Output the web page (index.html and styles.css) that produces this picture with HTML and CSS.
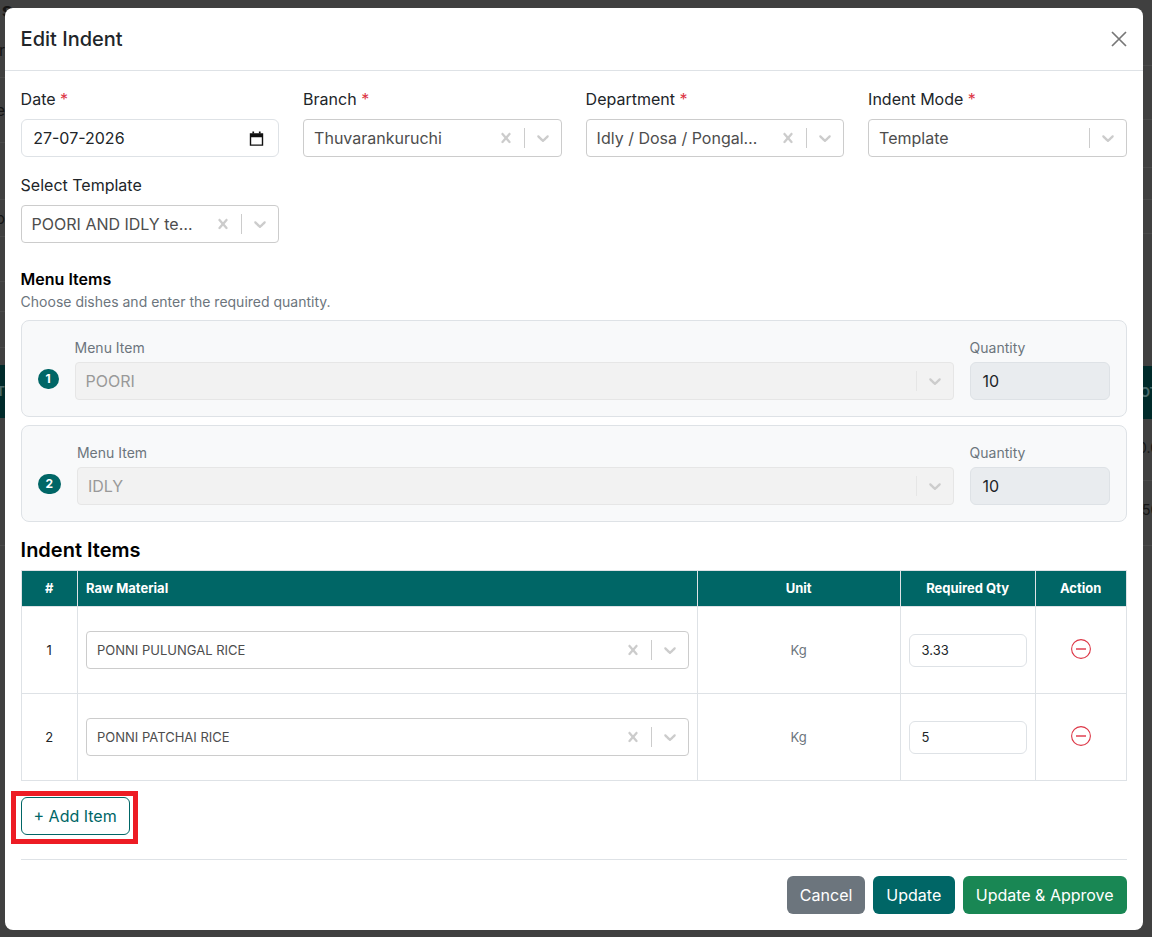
FILE: index.html
```html
<!DOCTYPE html>
<html lang="en">
<head>
<meta charset="utf-8">
<title>Edit Indent</title>
<link rel="stylesheet" href="styles.css">
</head>
<body>
<svg class="defs" width="0" height="0" aria-hidden="true">
  <symbol id="i-x" viewBox="0 0 20 20"><path d="M14.348 14.849c-0.469 0.469-1.229 0.469-1.697 0l-2.651-3.030-2.651 3.029c-0.469 0.469-1.229 0.469-1.697 0-0.469-0.469-0.469-1.229 0-1.697l2.758-3.15-2.759-3.152c-0.469-0.469-0.469-1.228 0-1.697s1.228-0.469 1.697 0l2.652 3.031 2.652-3.031c0.469-0.469 1.228-0.469 1.697 0s0.469 1.229 0 1.697l-2.758 3.152 2.758 3.15c0.469 0.469 0.469 1.229 0 1.698z"/></symbol>
  <symbol id="i-down" viewBox="0 0 20 20"><path d="M4.516 7.548c0.436-0.446 1.043-0.481 1.576 0l3.908 3.747 3.908-3.747c0.533-0.481 1.141-0.446 1.576 0 0.436 0.445 0.408 1.197 0 1.615-0.406 0.418-4.695 4.502-4.695 4.502-0.217 0.223-0.502 0.335-0.789 0.335s-0.572-0.112-0.791-0.335c0 0-4.287-4.084-4.695-4.502s-0.436-1.17 0-1.615z"/></symbol>
  <symbol id="i-minus" viewBox="0 0 20 20"><circle cx="10" cy="10" r="9.4" fill="none" stroke="#dc3545" stroke-width="1.1"/><path d="M5 10h10" stroke="#e8707d" stroke-width="2"/></symbol>
</svg>

<div class="page" aria-hidden="true">
  <div class="strip strip-left">
    <div class="bg-row r0"><b>s</b></div>
    <div class="bg-row r1">r</div>
    <div class="bg-row r2">e</div>
    <div class="bg-row r3"></div>
    <div class="bg-row r4">o</div>
    <div class="bg-row r5"></div>
    <div class="bg-row r6"></div>
    <div class="bg-row r7"></div>
    <div class="bg-band">T</div>
    <div class="bg-row r8"></div>
  </div>
  <div class="strip strip-right">
    <div class="bg-row q0"></div>
    <div class="bg-row q1"></div>
    <div class="bg-row q2"></div>
    <div class="bg-row q3"></div>
    <div class="bg-row q4"></div>
    <div class="bg-row q5"></div>
    <div class="bg-band">OT</div>
    <div class="bg-row q6"><span>0.0</span></div>
    <div class="bg-row q7"><span>50</span></div>
  </div>
</div>

<div class="modal">
  <header class="modal-head">
    <h1 class="modal-title">Edit Indent</h1>
    <button class="close" aria-label="Close">
      <svg width="16" height="16" viewBox="0 0 16 16"><path d="M1 1l14 14M15 1L1 15" stroke="#777" stroke-width="1.7" fill="none"/></svg>
    </button>
  </header>

  <div class="modal-body">
    <div class="form-grid">
      <div class="field">
        <label class="label">Date <span class="req">*</span></label>
        <div class="input date">
          <span>27-07-2026</span>
          <svg class="cal" width="15" height="15" viewBox="0 0 15 15"><path d="M.8 2.2h13.4v12.6H.8z M2.2 6.2v7.2h10.6V6.2z" fill="#111" fill-rule="evenodd"/><path d="M3.4 .4h1.7v2H3.4zM9.9 .4h1.7v2H9.9z" fill="#111"/></svg>
        </div>
      </div>
      <div class="field">
        <label class="label">Branch <span class="req">*</span></label>
        <div class="select">
          <span class="value">Thuvarankuruchi</span>
          <svg class="ind"><use href="#i-x"/></svg><i class="sep"></i><svg class="ind"><use href="#i-down"/></svg>
        </div>
      </div>
      <div class="field">
        <label class="label">Department <span class="req">*</span></label>
        <div class="select">
          <span class="value">Idly / Dosa / Pongal/Vadai</span>
          <svg class="ind"><use href="#i-x"/></svg><i class="sep"></i><svg class="ind"><use href="#i-down"/></svg>
        </div>
      </div>
      <div class="field">
        <label class="label">Indent Mode <span class="req">*</span></label>
        <div class="select">
          <span class="value">Template</span>
          <i class="sep"></i><svg class="ind"><use href="#i-down"/></svg>
        </div>
      </div>
      <div class="field">
        <label class="label">Select Template</label>
        <div class="select">
          <span class="value">POORI AND IDLY template</span>
          <svg class="ind"><use href="#i-x"/></svg><i class="sep"></i><svg class="ind"><use href="#i-down"/></svg>
        </div>
      </div>
    </div>

    <h2 class="section-title">Menu Items</h2>
    <p class="section-sub">Choose dishes and enter the required quantity.</p>

    <div class="menu-card">
      <span class="badge">1</span>
      <div class="menu-main">
        <div class="small-label">Menu Item</div>
        <div class="select disabled">
          <span class="value">POORI</span>
          <i class="sep"></i><svg class="ind"><use href="#i-down"/></svg>
        </div>
      </div>
      <div class="menu-qty">
        <div class="small-label">Quantity</div>
        <div class="input readonly">10</div>
      </div>
    </div>

    <div class="menu-card">
      <span class="badge">2</span>
      <div class="menu-main">
        <div class="small-label">Menu Item</div>
        <div class="select disabled">
          <span class="value">IDLY</span>
          <i class="sep"></i><svg class="ind"><use href="#i-down"/></svg>
        </div>
      </div>
      <div class="menu-qty">
        <div class="small-label">Quantity</div>
        <div class="input readonly">10</div>
      </div>
    </div>

    <h2 class="items-title">Indent Items</h2>

    <table class="items">
      <colgroup>
        <col class="c-num"><col class="c-raw"><col class="c-unit"><col class="c-qty"><col class="c-act">
      </colgroup>
      <thead>
        <tr><th>#</th><th class="left">Raw Material</th><th>Unit</th><th>Required Qty</th><th>Action</th></tr>
      </thead>
      <tbody>
        <tr>
          <td class="num">1</td>
          <td>
            <div class="select compact">
              <span class="value">PONNI PULUNGAL RICE</span>
              <svg class="ind"><use href="#i-x"/></svg><i class="sep"></i><svg class="ind"><use href="#i-down"/></svg>
            </div>
          </td>
          <td class="unit">Kg</td>
          <td><div class="input qty">3.33</div></td>
          <td class="act"><svg class="remove"><use href="#i-minus"/></svg></td>
        </tr>
        <tr>
          <td class="num">2</td>
          <td>
            <div class="select compact">
              <span class="value">PONNI PATCHAI RICE</span>
              <svg class="ind"><use href="#i-x"/></svg><i class="sep"></i><svg class="ind"><use href="#i-down"/></svg>
            </div>
          </td>
          <td class="unit">Kg</td>
          <td><div class="input qty">5</div></td>
          <td class="act"><svg class="remove"><use href="#i-minus"/></svg></td>
        </tr>
      </tbody>
    </table>

    <div class="add-wrap">
      <button class="btn-add">+ Add Item</button>
      <span class="annot"></span>
    </div>

    <footer class="modal-foot">
      <button class="btn btn-cancel">Cancel</button>
      <button class="btn btn-update">Update</button>
      <button class="btn btn-approve">Update &amp; Approve</button>
    </footer>
  </div>
</div>
</body>
</html>
```

FILE: styles.css
```css
* { box-sizing: border-box; }
html, body { margin: 0; padding: 0; }
body {
  width: 1152px;
  height: 937px;
  overflow: hidden;
  background: #404040;
  font-family: Inter, "Liberation Sans", sans-serif;
  color: #212529;
  position: relative;
}
.defs { position: absolute; }

/* dimmed page behind the modal */
.page { display: flex; justify-content: space-between; height: 937px; }
.strip { overflow: hidden; font-size: 16px; color: #161616; }
.strip-left { width: 14px; }
.strip-right { width: 9px; }
.bg-row { border-bottom: 1px solid #4a4a4a; white-space: nowrap; }
.strip-left .bg-row { display: flex; justify-content: flex-end; align-items: center; padding-right: 9px; }
.r0 { height: 78px; align-items: flex-start !important; font-size: 20px; }
.r1 { height: 0; border: 0; }
.r0 b { margin: 0 -8px 0 0; line-height: 20px; }
.r1 { position: relative; top: -28px; }
.r2 { height: 65px; }
.r3 { height: 57px; }
.r4 { height: 37px; }
.r5 { height: 45px; }
.r6 { height: 30px; }
.r7 { height: 36px; }
.bg-band {
  height: 53px;
  margin-top: 17px;
  background: #002a2a;
  color: #4a6a6a;
  font-size: 13px;
  font-weight: 700;
  line-height: 53px;
  white-space: nowrap;
}
.strip-left .bg-band { display: flex; justify-content: flex-end; padding-right: 9px; }
.r8 { height: 128px; }
.q0 { height: 66px; }
.q1 { height: 54px; }
.q2 { height: 48px; }
.q3 { height: 32px; }
.q4 { height: 34px; }
.q5 { height: 0; border: 0; }
.strip-right .bg-band { margin-top: 132px; text-indent: -3px; }
.q6 { height: 62px; padding-top: 20px; font-size: 14px; text-indent: -5px; }
.q7 { height: 65px; padding-top: 20px; font-size: 14px; text-indent: -1px; }

/* modal */
.modal {
  position: absolute;
  top: 8px;
  left: 4.6px;
  width: 1138px;
  height: 922px;
  background: #fff;
  border-radius: 8px;
  display: flex;
  flex-direction: column;
}
.modal-head {
  height: 63px;
  flex: none;
  padding: 0 16px;
  display: flex;
  align-items: center;
  justify-content: space-between;
  border-bottom: 1px solid #dee2e6;
}
.modal-title { margin: 0; font-size: 20px; font-weight: 500; line-height: 1.5; color: #212529; }
.close { border: 0; background: none; padding: 0; width: 16px; height: 16px; display: block; }
.close svg { display: block; }
.modal-body { padding: 16px; flex: 1; }

.form-grid { display: grid; grid-template-columns: repeat(4, minmax(0, 1fr)); column-gap: 24px; row-gap: 16px; }
.label { display: block; font-size: 16px; line-height: 24px; margin-bottom: 8px; }
.req { color: #dc3545; }

.input {
  height: 38px;
  border: 1px solid #dee2e6;
  border-radius: 6px;
  background: #fff;
  font-size: 16px;
  padding: 0 12px;
  display: flex;
  align-items: center;
}
.date { justify-content: space-between; padding: 0 14px 0 11.6px; }
.cal { display: block; }

.select {
  height: 38px;
  border: 1px solid #ccc;
  border-radius: 4px;
  background: #fff;
  display: flex;
  align-items: center;
  padding-left: 10px;
}
.value {
  flex: 1;
  min-width: 0;
  overflow: hidden;
  text-overflow: ellipsis;
  white-space: nowrap;
  font-size: 16px;
  color: #4d4d4d;
  padding-right: 8px;
}
.ind { width: 20px; height: 20px; margin: 0 8px; fill: #ccc; flex: none; }
.sep { width: 1px; height: 20px; background: #ccc; flex: none; }
.select.disabled { background: #f2f2f2; border-color: #e6e6e6; }
.select.disabled .value { color: #999; }
.select.disabled .sep { background: #e6e6e6; }

.section-title { margin: 24px 0 0; font-size: 16px; font-weight: 600; line-height: 24px; color: #000; }
.section-sub { margin: 0 0 8px; font-size: 14px; line-height: 21px; color: #6c757d; }

.menu-card {
  height: 97px;
  margin-bottom: 8px;
  border: 1px solid #dee2e6;
  border-radius: 8px;
  background: #f8f9fa;
  padding: 16px;
  display: flex;
  align-items: center;
  gap: 16px;
}
.badge {
  flex: none;
  margin-top: 21px;
  padding: 0 7.9px;
  height: 20px;
  border-radius: 10px;
  background: #006666;
  color: #fff;
  font-size: 12px;
  font-weight: 700;
  line-height: 20px;
}
.menu-main { flex: 1; min-width: 0; }
.menu-qty { width: 140px; flex: none; }
.small-label { font-size: 14px; line-height: 21px; margin-bottom: 4px; color: #6c757d; }
.input.readonly { background: #e9ecef; border-color: #dee2e6; }

.items-title { margin: 0 0 5px; padding-top: 5px; font-size: 20px; font-weight: 600; line-height: 30px; color: #000; }

.items { width: 1105px; table-layout: fixed; border-collapse: collapse; font-size: 13px; }
.c-num { width: 56px; }
.c-raw { width: 620px; }
.c-unit { width: 203px; }
.c-qty { width: 135px; }
.c-act { width: 91px; }
.items th {
  height: 36px;
  padding: 0 8px 2px;
  background: #006666;
  color: #fff;
  font-size: 13px;
  font-weight: 700;
  text-align: center;
  border: 1px solid #dee2e6;
}
.items th.left { text-align: left; padding-left: 8.4px; }
.items td { height: 87px; padding: 0 8px; border: 1px solid #dee2e6; vertical-align: middle; }
.num { text-align: center; }
.unit { text-align: center; color: #6c757d; }
.act { text-align: center; }
.select.compact { padding-left: 10.4px; }
.compact .value { font-size: 13px; }
.input.qty { height: 33px; font-size: 13px; }
.remove { display: block; width: 20px; height: 20px; margin: -2px auto 0; }

.add-wrap { position: relative; width: 109px; height: 38px; margin-top: 16px; }
.btn-add {
  display: block;
  width: 109px;
  height: 38px;
  padding: 0;
  border: 1px solid #006666;
  border-radius: 6px;
  background: #fff;
  color: #006666;
  font: 400 16px Inter, "Liberation Sans", sans-serif;
}
.annot { position: absolute; top: -6px; left: -10px; right: -8px; bottom: -9px; border: 5px solid #ed1c24; }

.modal-foot {
  margin-top: 24px;
  padding-top: 16px;
  border-top: 1px solid #dee2e6;
  display: flex;
  justify-content: flex-end;
  gap: 8px;
}
.btn {
  height: 38px;
  padding: 0 13px;
  border: 0;
  border-radius: 6px;
  color: #fff;
  font: 400 16px Inter, "Liberation Sans", sans-serif;
}
.btn-cancel { background: #6c757d; padding: 0 12.5px; }
.btn-update { background: #006666; padding: 0 13.5px; }
.btn-approve { background: #198754; }
```
